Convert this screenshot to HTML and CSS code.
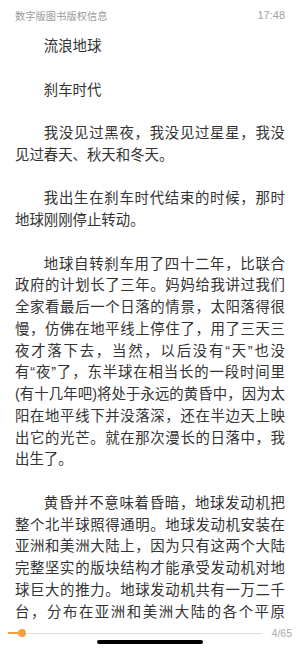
FILE: index.html
```html
<!DOCTYPE html>
<html lang="zh-CN">
<head>
<meta charset="utf-8">
<title>流浪地球</title>
<link rel="stylesheet" href="styles.css">
</head>
<body>
<div class="screen">
  <header class="topbar">
    <span class="book-info">数字版图书版权信息</span>
    <span class="clock">17:48</span>
  </header>
  <main class="reader">
    <p class="para">流浪地球</p>
    <p class="para">刹车时代</p>
    <p class="para">我没见过黑夜，我没见过星星，我没见过春天、秋天和冬天。</p>
    <p class="para">我出生在刹车时代结束的时候，那时地球刚刚停止转动。</p>
    <p class="para">地球自转刹车用了四十二年，比联合政府的计划长了三年。妈妈给我讲过我们全家看最后一个日落的情景，太阳落得很慢，仿佛在地平线上停住了，用了三天三夜才落下去，当然，以后没有“天”也没<span class="keep">有“夜”了，</span>东半球在相当长的一段时间里(有十几年吧)将处于永远的黄昏中，因为太阳在地平线下并没落深，还在半边天上映出它的光芒。就在那次漫长的日落中，我出生了。</p>
    <p class="para">黄昏并不意味着昏暗，地球发动机把整个北半球照得通明。地球发动机安装在亚洲和美洲大陆上，因为只有这两个大陆完整坚实的版块结构才能承受发动机对地球巨大的推力。地球发动机共有一万二千台，分布在亚洲和美洲大陆的各个平原上。</p>
  </main>
  <footer class="progress">
    <div class="track">
      <div class="fill" style="width: 5.5%"></div>
      <div class="thumb" style="left: 5.5%"></div>
    </div>
    <span class="page-count">4/65</span>
  </footer>
  <div class="home-indicator"></div>
</div>
</body>
</html>
```
FILE: styles.css
```css
html, body {
  margin: 0;
  padding: 0;
  background: #ffffff;
}

.screen {
  position: relative;
  width: 300px;
  height: 649px;
  display: flex;
  flex-direction: column;
  overflow: hidden;
  font-family: "Liberation Sans", "Noto Sans CJK SC", sans-serif;
}

.topbar {
  height: 30px;
  flex: none;
  display: flex;
  align-items: center;
  justify-content: space-between;
  padding: 0 15px;
  color: #9a9a9a;
}

.book-info {
  font-size: 10.2px;
  letter-spacing: 0.1px;
}

.clock {
  font-size: 11px;
  color: #a0a0a0;
}

.reader {
  flex: 1;
  overflow: hidden;
  padding: 6px 15px 0;
  color: #333333;
  font-size: 14.4px;
  line-height: 21.75px;
}

.para {
  margin: 0 0 21.75px;
  text-indent: 2em;
  text-align: justify;
}

.keep {
  white-space: nowrap;
}

.progress {
  flex: none;
  height: 25px;
  display: flex;
  align-items: center;
  padding: 0 8px 7px;
  box-sizing: border-box;
}

.track {
  position: relative;
  flex: 1;
  height: 1px;
  background: #dedede;
}

.fill {
  height: 2px;
  margin-top: -0.5px;
  background: #f5a03a;
}

.thumb {
  position: absolute;
  top: 50%;
  width: 8px;
  height: 8px;
  margin: -4px 0 0 -4px;
  border-radius: 50%;
  background: #f5a03a;
}

.page-count {
  margin-left: 10px;
  font-size: 10.5px;
  color: #a8a8a8;
}

.home-indicator {
  position: absolute;
  left: 97px;
  bottom: 5px;
  width: 106px;
  height: 4px;
  border-radius: 2px;
  background: #000000;
}
```
